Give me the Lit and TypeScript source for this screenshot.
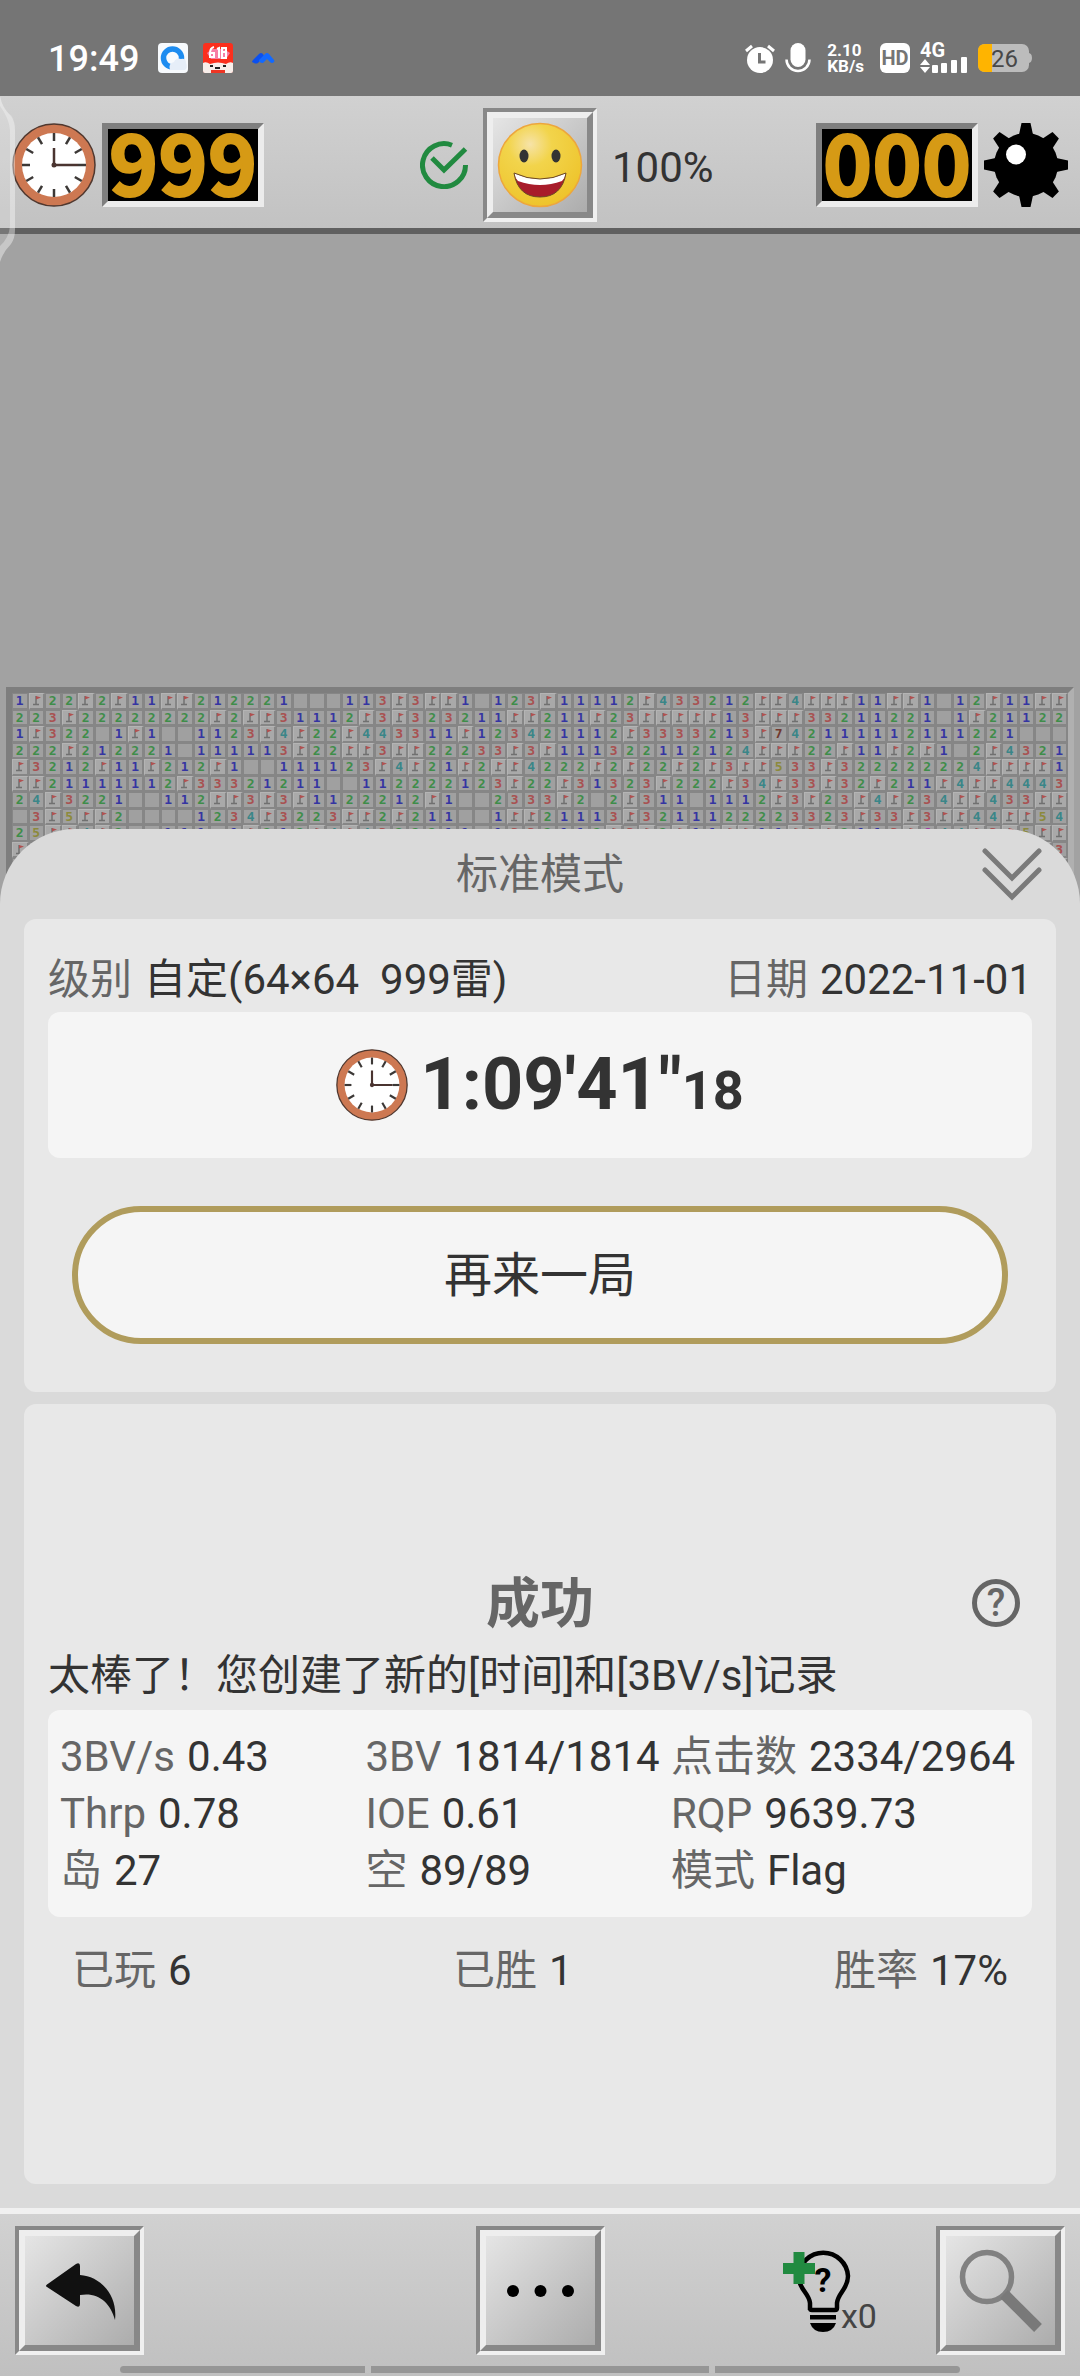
import { LitElement, html, svg, css, nothing } from 'lit';
import { customElement, property, state } from 'lit/decorators.js';
import { classMap } from 'lit/directives/class-map.js';

// F = flag, . = opened empty cell
const ROWS = [
  '1F22F2F11FF212221...1' + '13F3FF1.123F11112F4332' + '12FF4FFF11FF1.12F11FF',
  '223F22222222F2FF31112' + 'F3F323211FF211F23FFFFF' + '13FFF33211221.1F21122',
  '1F322.1F1..1123F4F22F' + '443311F123421112F33332' + '13F742111112111221...',
  '222F212221.111113F22F' + 'F3FF22233F3F1113221121' + '24FFF22F11F2F1.2F4321',
  'F3212F11F212F1..11112' + '3F4F21F2FF4222F2F22F2F' + '3FF533F322222224FFFF1',
  'FF21111112F33321211..' + '112222123F22F31323F222' + 'F34F33F32F211F4FF4443',
  '24F3221..112FF3F3F112' + '2212F1..2333F2.2F311.1' + '112F3F23F4F234FF433FF',
  '.3F5FF2....1234F3223F' + 'F2F211..1FF21113F32111' + '22223323F33F3FF44FF54',
  '25FF4F2..111.1F212F4F' + '4322211.1332112F3F2F11' + 'FF11F3F2113F644F3F5FF',
  'F3' + '.'.repeat(60) + 'F3',
  '12' + '.'.repeat(60) + '2F',
  '.1' + '.'.repeat(60) + '12',
];

const STATS = [
  ['3BV/s', '0.43'],
  ['3BV', '1814/1814'],
  ['点击数', '2334/2964'],
  ['Thrp', '0.78'],
  ['IOE', '0.61'],
  ['RQP', '9639.73'],
  ['岛', '27'],
  ['空', '89/89'],
  ['模式', 'Flag'],
];

const TOTALS = [
  ['已玩', '6'],
  ['已胜', '1'],
  ['胜率', '17%'],
];

const clockIcon = (size: number) => html`
  <svg width=${size} height=${size} viewBox="0 0 84 84" aria-hidden="true">
    <circle cx="42" cy="42" r="41" fill="#cd7852" stroke="#50382f" stroke-width="1.5" />
    <circle cx="42" cy="42" r="32" fill="#fff" />
    ${Array.from({ length: 12 }, (_, i) => svg`
      <path d="M42 10v8" stroke="#3c3836" stroke-width="2.5" transform="rotate(${i * 30} 42 42)" />
    `)}
    <path d="M42 25v17h24" fill="none" stroke="#4a3430" stroke-width="2.5" />
    <circle cx="42" cy="42" r="2.5" fill="#4a3430" />
  </svg>
`;

const mineIcon = html`
  <svg width="84" height="84" viewBox="0 0 84 84" aria-hidden="true">
    <circle cx="42" cy="42" r="32" />
    ${Array.from({ length: 8 }, (_, i) => svg`
      <path d="M37.500 0h9l3 14h-15z" transform="rotate(${i * 45} 42 42)" />
    `)}
    <circle cx="32" cy="31.500" r="10" fill="#fff" />
  </svg>
`;

const smileyIcon = html`
  <svg viewBox="0 0 94 94" aria-hidden="true">
    <defs>
      <radialGradient id="skin" cx="38%" cy="25%" r="75%">
        <stop offset="0" stop-color="#f6e3a8" />
        <stop offset="0.35" stop-color="#f2d44b" />
        <stop offset="1" stop-color="#eec42c" />
      </radialGradient>
    </defs>
    <circle cx="47" cy="47" r="41.500" fill="url(#skin)" stroke="#eda63c" stroke-width="1.500" />
    <ellipse cx="31" cy="38" rx="4.500" ry="6.500" fill="#333" />
    <ellipse cx="63" cy="38" rx="4.500" ry="6.500" fill="#333" />
    <path d="M21 55q26 12 52 0q-4 24-26 24t-26-24z" fill="#a81c2a" />
    <path d="M21 55q26 12 52 0q-1 5-4 8q-22 8-44 0q-3-3-4-8z" fill="#fff" />
    <path d="M21 55q26 12 52 0q-4 24-26 24t-26-24z" fill="none" stroke="#6b4a24" stroke-width="1" />
  </svg>
`;

const checkIcon = html`
  <svg class="check" width="48" height="48" viewBox="0 0 48 48" aria-hidden="true">
    <path d="M32 4.200A21.500 21.500 0 1 0 45.500 24M12 17l12 12L45.500 8" fill="none" stroke="#218a40" stroke-width="5" />
  </svg>
`;

const backIcon = html`
  <svg viewBox="0 0 109 109" aria-hidden="true">
    <path d="M22 48.500L51 28q4-2 4 2v9c20 1 38 20 35 45c-5-18-17-28-35-25v9q0 4-4 2L22 51q-2-1 0-2.500z" fill="#111" />
  </svg>
`;

const dotsIcon = html`
  <svg viewBox="0 0 109 109" aria-hidden="true">
    <circle cx="27" cy="55" r="6" /><circle cx="54.500" cy="55" r="6" /><circle cx="82" cy="55" r="6" />
  </svg>
`;

const searchIcon = html`
  <svg viewBox="0 0 109 109" aria-hidden="true" fill="none" stroke="#818181">
    <circle cx="41" cy="41" r="24.500" stroke-width="5.500" />
    <path d="M58 58L92 92" stroke="#797979" stroke-width="11" />
  </svg>
`;

const bulbIcon = html`
  <svg width="98" height="96" viewBox="0 -6 98 96" role="img" aria-label="hint">
    <path d="M27 61V54C26 44 15.500 40 15.500 27A24.800 24.800 0 0 1 65 27C65 40 55 44 54 54V59Q54 61 52 61H29Q27 61 27 59" fill="none" stroke="#000" stroke-width="4.500" />
    <path d="M27 66h26v4.500h-26zM27 74h26q-3 9-13 9t-13-9z" />
    <text class="bulb-q" x="40" y="43" text-anchor="middle">?</text>
    <path d="M10.500 3h11v11h10.500v11h-10.500v10h-11v-10h-10.500v-11h10.500z" fill="#218a40" />
    <text class="bulb-count" x="58" y="79">x0</text>
  </svg>
`;

@customElement('status-bar')
export class StatusBar extends LitElement {
  static styles = css`
    :host {
      display: flex;
      align-items: center;
      justify-content: space-between;
      box-sizing: border-box;
      height: 96px;
      padding: 20px 48px 0;
      background: #757575;
      color: #fff;
      font-family: Roboto, sans-serif;
    }

    svg {
      display: block;
    }

    .side {
      display: flex;
      align-items: center;
      gap: 10px;
    }

    .apps {
      gap: 15px;
    }

    .time {
      margin-right: 4px;
      padding-top: 2px;
      font-size: 36px;
      font-weight: 500;
      line-height: 40px;
    }

    .speed {
      margin: 0 6px;
      font-size: 17px;
      font-weight: 700;
      line-height: 16px;
    }

    .speed span {
      display: block;
    }

    .hd, .net {
      font-size: 20px;
      font-weight: 700;
    }

    .hd {
      fill: #757575;
    }

    .net {
      fill: #fff;
    }

    .level {
      font-size: 24px;
      fill: #484848;
    }
  `;

  render() {
    return html`
      <div class="side apps">
        <span class="time">19:49</span>
        <svg width="30" height="30" viewBox="0 0 30 30">
          <rect width="30" height="30" rx="4" fill="#f7fafd" />
          <circle cx="14.500" cy="15" r="9" fill="none" stroke="#1d8cf0" stroke-width="5.500" />
          <path d="M12 27q-2-7 4-8q2-5 7-3q5-1 5 4q2 5-1 7z" fill="#e6eef8" />
        </svg>
        <svg width="30" height="30" viewBox="0 0 30 30">
          <rect width="30" height="30" rx="3" fill="#fb2f1d" />
          <path d="M4 10l5-4h12l6 4l-4 6h-15z" fill="#f77fa6" />
          <path d="M11 4q-4 1-4 6v4h4v-4h-4M14 6l2-1v10M19 5h4v4h-4zM19 9h4v6h-4z" fill="none" stroke="#fff" stroke-width="2" />
          <path d="M0 20q3-2 7 1q8-3 16 0q4-3 7-1v8q0 2-2 2h-26q-2 0-2-2z" fill="#f8eeea" />
          <path d="M7 22h3v2h-3zM20 22h3v2h-3zM12 24h5v2h-5z" fill="#222" />
          <path d="M8 27h14v3h-14z" fill="#ee3524" />
        </svg>
        <svg width="30" height="30" viewBox="0 0 30 30">
          <path d="M5 17l6-6q2-2 4 0l1 2l-6 7q-2 1-4 0l-2-1q0-1 1-2z" fill="#0b50ef" />
          <path d="M11 17l6-6q2-2 4 0l5 6q1 1 0 2q-2 2-4 0l-3-3l-4 4q-4 0-4-3z" fill="#1269ff" />
        </svg>
      </div>
      <div class="side">
        <svg width="30" height="30" viewBox="0 0 30 30">
          <circle cx="15" cy="17" r="13" fill="#fff" />
          <path d="M1 8l6-5M29 8l-6-5" stroke="#fff" stroke-width="3" />
          <path d="M14.500 10v9h6" fill="none" stroke="#757575" stroke-width="3" />
        </svg>
        <svg width="26" height="30" viewBox="0 0 26 30">
          <rect x="5.500" width="15" height="24" rx="7.500" fill="#fff" />
          <path d="M1.500 16.500a11.500 11.500 0 0 0 23 0" fill="none" stroke="#fff" stroke-width="2.500" />
        </svg>
        <div class="speed"><span>2.10</span><span>KB/s</span></div>
        <svg width="30" height="30" viewBox="0 0 30 30">
          <rect width="30" height="30" rx="6" fill="#fff" />
          <text class="hd" x="15" y="22" text-anchor="middle">HD</text>
        </svg>
        <svg width="48" height="42" viewBox="0 -6 48 42" fill="#fff">
          <text class="net" x="0" y="14">4G</text>
          <path d="M0 22l5-6l5 6zM0 24h10l-5 6z" />
          <rect x="12" y="22" width="6" height="8" rx="1" />
          <rect x="21" y="20" width="6" height="10" rx="1" />
          <rect x="31" y="17" width="6" height="13" rx="1" />
          <rect x="41" y="14" width="6" height="16" rx="1" />
        </svg>
        <svg width="54" height="28" viewBox="0 0 54 28">
          <rect width="51" height="28" rx="7" fill="#bcbcbc" />
          <path d="M50 9q4 0 4 5t-4 5z" fill="#bcbcbc" />
          <path d="M14 0h-7q-7 0-7 7v14q0 7 7 7h7z" fill="#ffb400" />
          <text class="level" x="13" y="23">26</text>
        </svg>
      </div>
    `;
  }
}

@customElement('mine-board')
export class MineBoard extends LitElement {
  @property({ attribute: false }) rows: string[] = [];

  static styles = css`
    :host {
      display: grid;
      grid-template-columns: repeat(64, minmax(0, 1fr));
      align-content: start;
      border: 6px solid;
      border-color: #7e7e7e #b0b0b0 #b0b0b0 #7e7e7e;
      background: #868686;
    }

    .cell {
      display: flex;
      align-items: center;
      justify-content: center;
      box-sizing: border-box;
      aspect-ratio: 1;
      border: 1px solid #868686;
      border-width: 1px 2px 2px 1px;
      background: #a0a0a0;
      font: bold 13px/13px "DejaVu Sans Mono", monospace;
    }

    .flag {
      border-color: #b4b4b4 #868686 #868686 #b4b4b4;
      background: #a9a9a9;
    }

    .flag svg {
      width: 11px;
      height: 11px;
    }

    .n1 { color: #3535a2; }
    .n2 { color: #3f8d4a; }
    .n3 { color: #a85252; }
    .n4 { color: #3a8688; }
    .n5 { color: #8c8a3c; }
    .n6 { color: #a23aa2; }
    .n7 { color: #71392f; }
  `;

  cell(c: string) {
    if (c === 'F') {
      return html`
        <div class="cell flag">
          <svg viewBox="0 0 11 11"><path d="M5 1v8M2 9.500h6" stroke="#707070" stroke-width="1.500" /><path d="M5 1l5 1.500l-5 2z" fill="#b05050" /></svg>
        </div>
      `;
    }
    return html`<div class=${classMap({ cell: true, [`n${c}`]: c !== '.' })}>${c === '.' ? nothing : c}</div>`;
  }

  render() {
    return this.rows.map(row => [...row].map(c => this.cell(c)));
  }
}

@customElement('app-root')
export class AppRoot extends LitElement {
  @state() private mines = '000';
  @state() private seconds = '999';
  @state() private progress = '100%';

  static styles = css`
    :host {
      display: flex;
      flex-direction: column;
      position: relative;
      min-height: 100vh;
      background: #a2a2a2;
      color: #333;
      font-family: Roboto, "Noto Sans CJK SC", sans-serif;
      font-size: 42px;
      line-height: 57px;
    }

    svg {
      display: block;
    }

    button {
      margin: 0;
      padding: 0;
      border: 0;
      background: none;
      color: inherit;
      font: inherit;
      cursor: pointer;
    }

    h1, h2, p, dl, dd {
      margin: 0;
      font-weight: 400;
    }

    .topbar {
      display: grid;
      grid-template-columns: 1fr auto 1fr;
      align-items: center;
      gap: 15px;
      height: 126px;
      padding: 6px 12px 0;
      border-bottom: 6px solid #606060;
      background: linear-gradient(#d1d1d1, #c2c2c2);
    }

    .group {
      display: flex;
      align-items: center;
      gap: 6px;
    }

    .check, .progress {
      flex: none;
    }

    .check {
      margin-left: auto;
    }

    .progress {
      margin-right: auto;
      padding-top: 4px;
    }

    .led {
      box-sizing: border-box;
      width: 162px;
      height: 84px;
      border: 6px solid;
      border-color: #7f7f7f #ececec #ececec #7f7f7f;
      background: #000;
      color: #d69a15;
      font: bold 84px/62px "Noto Sans CJK SC", sans-serif;
      text-align: center;
      -webkit-text-stroke: 2px #d69a15;
    }

    .bevel {
      box-sizing: border-box;
      width: 129px;
      height: 129px;
      border: 4px solid;
      border-color: #888 #f0f0f0 #f0f0f0 #888;
    }

    .bevel.small {
      width: 114px;
      height: 114px;
    }

    .face {
      display: block;
      box-sizing: border-box;
      width: 100%;
      height: 100%;
      border: 6px solid;
      border-color: #eee #888 #888 #eee;
      background: linear-gradient(135deg, #e5e5e5, #acacac);
    }

    /* translucent side handle of the gesture bar */
    .handle {
      position: absolute;
      top: 96px;
      left: 0;
    }

    .stage {
      display: grid;
      flex: 1;
      grid-template-rows: minmax(0, 1fr);
    }

    .stage > * {
      grid-area: 1 / 1;
      min-width: 0;
    }

    mine-board {
      margin: 453px 6px 0;
    }

    .sheet {
      display: flex;
      flex-direction: column;
      gap: 12px;
      z-index: 1;
      margin-top: 595px;
      padding: 0 24px 24px;
      border-radius: 75px 75px 0 0;
      background: #dadada;
    }

    .sheet-head {
      display: grid;
      grid-template-columns: 1fr auto 1fr;
      align-items: center;
      height: 78px;
      padding-top: 6px;
      padding-bottom: 6px;
      margin-bottom: -12px;
      color: #666;
    }

    .sheet-head h1 {
      grid-column: 2;
      font-size: 42px;
    }

    .sheet-head button {
      justify-self: end;
      margin-right: 14px;
    }

    .card {
      border-radius: 12px;
      background: #e8e8e8;
      padding: 24px;
    }

    .box {
      border-radius: 12px;
      background: #f5f5f5;
    }

    .label {
      color: #666;
    }

    .info {
      display: flex;
      align-items: center;
      justify-content: space-between;
      box-sizing: border-box;
      height: 69px;
      padding-top: 4px;
    }

    .info dd {
      white-space: pre;
    }

    .clock {
      display: flex;
      align-items: center;
      justify-content: center;
      gap: 12px;
      height: 146px;
      font-weight: 700;
      font-size: 72px;
      line-height: 84px;
    }

    .clock small {
      font-size: 54px;
      line-height: 54px;
    }

    .again {
      display: block;
      box-sizing: border-box;
      width: calc(100% - 48px);
      height: 138px;
      margin: 48px 24px 24px;
      border: 6px solid #b09c5c;
      border-radius: 69px;
      background: #f5f5f5;
      font-size: 48px;
    }

    .result {
      display: flex;
      flex: 1;
      flex-direction: column;
      justify-content: center;
    }

    .result-head {
      display: grid;
      grid-template-columns: 1fr auto 1fr;
      align-items: center;
      height: 78px;
      color: #666;
    }

    .result-head h2 {
      grid-column: 2;
      padding-top: 4px;
      font-size: 54px;
      font-weight: 700;
    }

    .help {
      justify-self: end;
      box-sizing: border-box;
      width: 48px;
      height: 48px;
      margin-right: 12px;
      border: 5px solid #666;
      border-radius: 50%;
      font-size: 38px;
      font-weight: 500;
      line-height: 38px;
    }

    .message {
      line-height: 68px;
    }

    .stats {
      display: grid;
      grid-template-columns: 7fr 7fr 8fr;
      padding: 18px 12px;
    }

    .pair {
      display: flex;
      gap: 12px;
      white-space: nowrap;
    }

    .totals {
      display: flex;
      align-items: center;
      justify-content: space-between;
      height: 108px;
      padding: 0 24px;
    }

    .toolbar {
      border-top: 6px solid #f0f0f0;
      background: linear-gradient(#d1d1d1, #c0c0c0);
    }

    .tools {
      display: grid;
      grid-template-columns: 1fr auto 1fr;
      align-items: center;
      padding: 12px 15px 11px;
    }

    .tools .group {
      justify-self: end;
      gap: 55px;
    }

    .bulb-q {
      font-size: 34px;
      font-weight: 700;
    }

    .bulb-count {
      font-size: 34px;
      fill: #444;
    }

    .navlines {
      display: flex;
      gap: 6px;
      padding: 0 120px 3px;
    }

    .navlines i {
      flex: 245;
      height: 7px;
      background: #969696;
    }

    .navlines i:first-child {
      border-radius: 4px 0 0 4px;
    }

    .navlines i:nth-child(2) {
      flex: 338;
    }

    .navlines i:last-child {
      border-radius: 0 4px 4px 0;
    }
  `;

  pair([label, value]: string[]) {
    return html`<div class="pair"><dt class="label">${label}</dt><dd>${value}</dd></div>`;
  }

  render() {
    return html`
      <status-bar></status-bar>
      <header class="topbar">
        <div class="group">
          ${clockIcon(84)}
          <div class="led">${this.seconds}</div>
          ${checkIcon}
        </div>
        <button class="bevel small" aria-label="restart"><span class="face">${smileyIcon}</span></button>
        <div class="group">
          <span class="progress">${this.progress}</span>
          <div class="led">${this.mines}</div>
          ${mineIcon}
        </div>
      </header>
      <svg class="handle" width="16" height="166" viewBox="0 0 16 166" aria-hidden="true">
        <path d="M0 0Q3 14 12 20Q15 26 15 34V134Q15 142 11 148Q3 156 0 166z" fill="#fff" fill-opacity="0.15" />
        <path d="M0 0Q2 12 11 20Q15 26 15 34V134Q15 142 11 148Q3 156 0 166V150Q9 142 10 130V34Q9 22 0 10z" fill="#fff" fill-opacity="0.3" />
      </svg>

      <main class="stage">
        <mine-board .rows=${ROWS}></mine-board>
        <div class="sheet">
          <div class="sheet-head">
            <h1>标准模式</h1>
            <button aria-label="collapse">
              <svg width="60" height="54" viewBox="0 0 60 54" fill="none" stroke="#7a7a7a" stroke-width="5" stroke-linecap="round">
                <path d="M3 4l27 27L57 4M3 23l27 27l27-27" />
              </svg>
            </button>
          </div>

          <section class="card">
            <dl class="info">
              ${this.pair(['级别', '自定(64×64  999雷)'])}
              ${this.pair(['日期', '2022-11-01'])}
            </dl>
            <div class="box clock">
              ${clockIcon(72)}
              <span>1:09'41"<small>18</small></span>
            </div>
            <button class="again">再来一局</button>
          </section>

          <section class="card result">
            <div class="result-head">
              <h2>成功</h2>
              <button class="help" aria-label="help">?</button>
            </div>
            <p class="message">太棒了！您创建了新的[时间]和[3BV/s]记录</p>
            <dl class="box stats">${STATS.map(s => this.pair(s))}</dl>
            <dl class="totals">${TOTALS.map(s => this.pair(s))}</dl>
          </section>
        </div>
      </main>

      <footer class="toolbar">
        <div class="tools">
          <button class="bevel" aria-label="back"><span class="face">${backIcon}</span></button>
          <button class="bevel" aria-label="more"><span class="face">${dotsIcon}</span></button>
          <div class="group">
            <button>${bulbIcon}</button>
            <button class="bevel" aria-label="zoom"><span class="face">${searchIcon}</span></button>
          </div>
        </div>
        <div class="navlines"><i></i><i></i><i></i></div>
      </footer>
    `;
  }
}
